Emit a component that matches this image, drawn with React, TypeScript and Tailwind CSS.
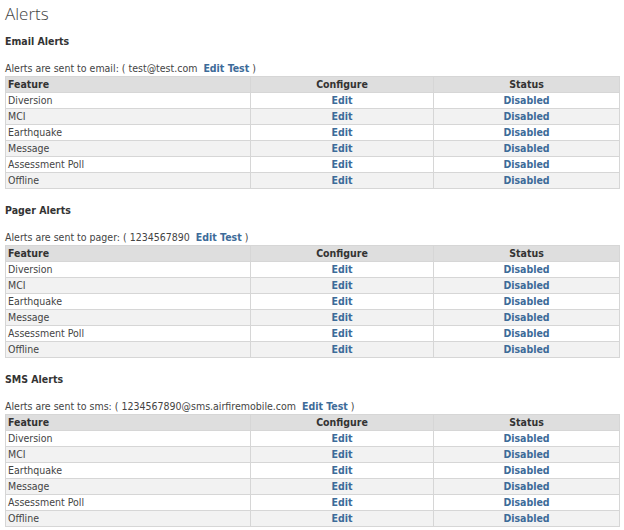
import React from 'react'

const features = ['Diversion', 'MCI', 'Earthquake', 'Message', 'Assessment Poll', 'Offline']

const sections = [
  { title: 'Email Alerts', kind: 'email', target: 'test@test.com' },
  { title: 'Pager Alerts', kind: 'pager', target: '1234567890' },
  { title: 'SMS Alerts', kind: 'sms', target: '1234567890@sms.airfiremobile.com' },
]

function AlertTable() {
  return (
    <table className="w-[614px] border-collapse border border-[#d6d6d6] table-fixed">
      <colgroup>
        <col className="w-[245px]" />
        <col className="w-[183px]" />
        <col className="w-[186px]" />
      </colgroup>
      <thead>
        <tr className="h-[16px] bg-[#dedede] text-[#333]">
          <th className="px-[2px] py-0 text-left font-bold border border-[#d6d6d6]">Feature</th>
          <th className="py-0 text-center font-bold border border-[#d6d6d6]">Configure</th>
          <th className="py-0 text-center font-bold border border-[#d6d6d6]">Status</th>
        </tr>
      </thead>
      <tbody>
        {features.map((f, i) => (
          <tr key={f} className={`h-[16px] ${i % 2 ? 'bg-[#f2f2f2]' : 'bg-white'}`}>
            <td className="px-[2px] py-0 text-[#444] border border-[#d6d6d6]">{f}</td>
            <td className="py-0 text-center font-bold text-[#3d6b99] border border-[#d6d6d6]">Edit</td>
            <td className="py-0 text-center font-bold text-[#3d6b99] border border-[#d6d6d6]">Disabled</td>
          </tr>
        ))}
      </tbody>
    </table>
  )
}

export default function App() {
  return (
    <div className="bg-white w-[624px] h-[530px] pl-[5px] text-[10.5px] leading-[15px] text-[#444] font-['Tahoma','DejaVu_Sans_Condensed','DejaVu_Sans',sans-serif]">
      <h1 className="h-[20px] text-[17px] leading-[27px] font-light text-[#444] font-['Open_Sans',sans-serif]">Alerts</h1>
      {sections.map((s) => (
        <div key={s.kind}>
          <h2 className="mt-[13px] h-[16px] leading-[16px] font-bold text-[#333]">{s.title}</h2>
          <div className="mt-[11px] h-[16px] leading-[16px]">
            Alerts are sent to {s.kind}: ( {s.target}&nbsp;&nbsp;<span className="font-bold text-[#3d6b99]">Edit Test</span> )
          </div>
          <AlertTable />
        </div>
      ))}
    </div>
  )
}
